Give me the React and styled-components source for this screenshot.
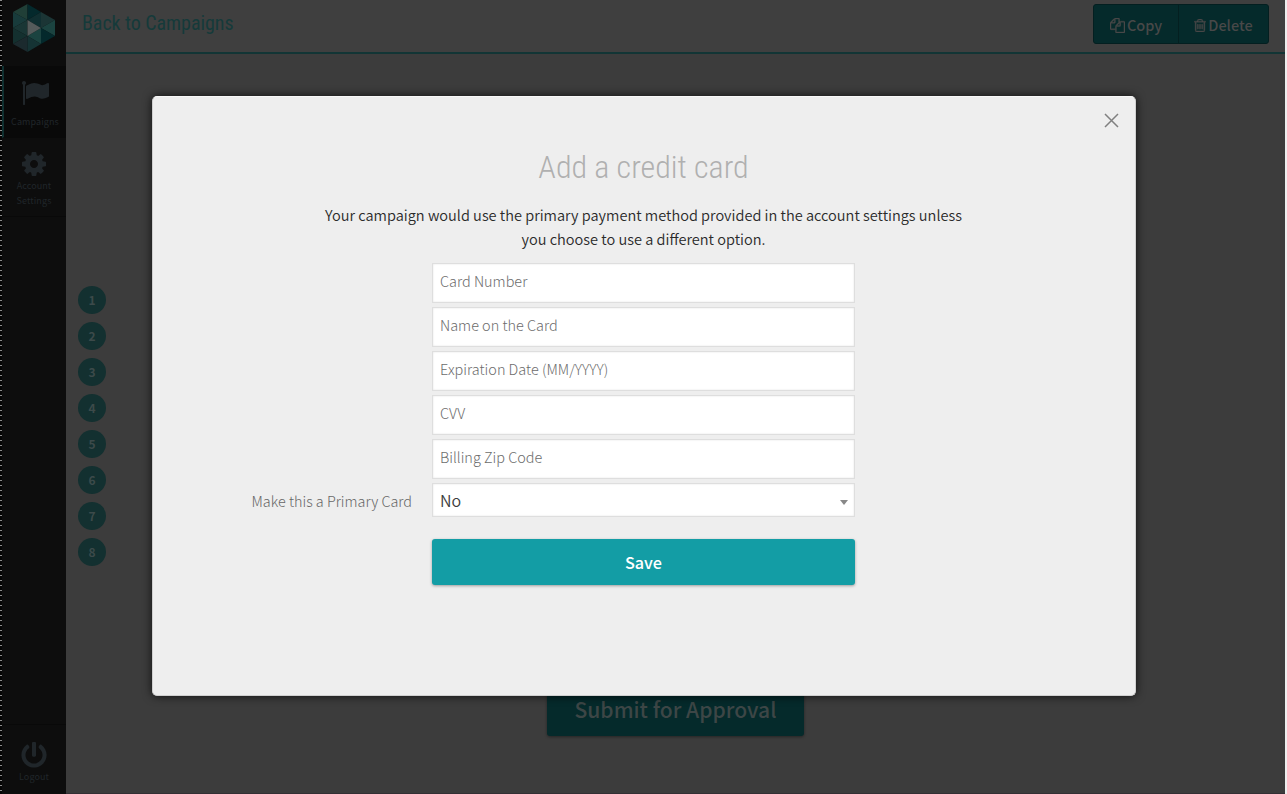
import React from 'react';
import styled, { createGlobalStyle } from 'styled-components';
import { FaPowerOff } from 'react-icons/fa';

const sans = '"Noto Sans CJK SC", "Noto Sans", sans-serif';
const condensed = '"Roboto Condensed", Roboto, sans-serif';

const GlobalStyle = createGlobalStyle`
  * { box-sizing: border-box; }
  html, body { margin: 0; height: 100%; overflow: hidden; background: #ededed; }
  #root { height: 100%; }
  body { font-family: ${sans}; font-size: 14px; line-height: 24px; }
  button, input { font-family: inherit; margin: 0; }
`;

const Page = styled.div`
  position: relative;
  display: flex;
  width: 1285px;
  height: 794px;
  background: #3c3c3c;
`;

const Ruler = styled.div`
  width: 2px;
  flex: none;
  background: repeating-linear-gradient(to bottom, #8d8d8d 0 1px, #050505 1px 5px);
`;

const Sidebar = styled.nav`
  width: 64px;
  flex: none;
  display: flex;
  flex-direction: column;
  background: #0d0d0d;
`;

const Brand = styled.div`
  height: 66px;
  padding: 4px 0 0 11px;
  svg { display: block; }
`;

const NavItem = styled.a`
  display: flex;
  flex-direction: column;
  align-items: center;
  height: ${p => p.$height}px;
  margin-top: ${p => (p.$last ? 'auto' : 0)};
  padding-top: ${p => p.$top}px;
  background: ${p => (p.$active ? '#090909' : 'transparent')};
  border-left: ${p => (p.$active ? '2px solid #0f3030' : '0')};
  border-top: ${p => (p.$last ? '1px solid #090909' : '0')};
  border-bottom: ${p => (p.$last ? '0' : '1px solid #090909')};
  color: #20262a;
  svg { display: block; }
`;

const NavLabel = styled.span`
  margin-top: ${p => p.$gap}px;
  font-size: 9px;
  line-height: 15px;
  letter-spacing: 0.1px;
  text-align: center;
  white-space: pre-line;
`;

const Main = styled.main`
  flex: 1;
  display: flex;
  flex-direction: column;
  border-bottom: 1px solid #332f34;
`;

const Header = styled.header`
  display: flex;
  justify-content: space-between;
  height: 54px;
  padding: 4px 16px 0;
  background: #3f3f3f;
  border-bottom: 2px solid #123535;
`;

const BackLink = styled.a`
  font-family: ${condensed};
  font-size: 20px;
  font-weight: 400;
  font-stretch: 75%;
  line-height: 38px;
  letter-spacing: -0.05px;
  color: #153a3a;
  white-space: nowrap;
`;

const ButtonGroup = styled.div`
  display: flex;
  height: 40px;
  border: 1px solid #041f20;
  border-radius: 3px;
  background: #052a2b;
  overflow: hidden;
`;

const HeaderButton = styled.button`
  display: flex;
  align-items: center;
  justify-content: center;
  gap: 2px;
  width: ${p => p.$width}px;
  padding: 1px 0 0;
  border: 0;
  border-left: ${p => (p.$divided ? '1px solid #041f20' : '0')};
  background: transparent;
  color: #484848;
  font-size: 14.5px;
  font-weight: 500;
  svg { margin-top: 2px; }
`;

const Steps = styled.ol`
  list-style: none;
  margin: 232px 0 0;
  padding: 0 12px;
  display: flex;
  flex-direction: column;
  gap: 8px;
`;

const Step = styled.li`
  width: 28px;
  height: 28px;
  border-radius: 50%;
  background: #133030;
  color: #3c4a4a;
  font-size: 12px;
  font-weight: 700;
  line-height: 27px;
  text-align: center;
`;

const Submit = styled.button`
  align-self: center;
  width: 257px;
  height: 52px;
  margin-top: 118px;
  padding: 0 0 2px;
  border: 0;
  border-radius: 3px;
  background: #052a2b;
  box-shadow: 0 1px 3px rgba(0, 0, 0, 0.4);
  color: #3d4646;
  font-size: 21.1px;
  font-weight: 500;
  line-height: 50px;
`;

const Backdrop = styled.div`
  position: absolute;
  inset: 0;
  display: flex;
  align-items: flex-start;
  padding: 96px 0 0 152px;
`;

const Dialog = styled.section`
  position: relative;
  display: flex;
  flex-direction: column;
  align-items: center;
  width: 984px;
  height: 600px;
  padding: 50px 1px 0 0;
  border: 1px solid #d0d0d0;
  border-top-color: #f8f8f8;
  border-radius: 5px;
  background: #eee;
  box-shadow: 0 0 10px rgba(0, 0, 0, 0.75);
`;

const Close = styled.button`
  position: absolute;
  top: 15.5px;
  right: 16.5px;
  padding: 0;
  border: 0;
  background: none;
  line-height: 0;
`;

const Title = styled.h2`
  margin: 0;
  font-family: ${condensed};
  font-size: 32px;
  font-weight: 300;
  font-stretch: 75%;
  line-height: 40px;
  color: #b0b0b0;
  white-space: nowrap;
`;

const Note = styled.p`
  margin: 16px 0 12px;
  width: 660px;
  font-size: 14.55px;
  font-weight: 350;
  line-height: 24px;
  color: #2a2a2a;
  text-align: center;
`;

const Form = styled.form`
  display: flex;
  flex-direction: column;
  width: 423px;
  gap: 4px;
`;

const Field = styled.input`
  display: block;
  width: 100%;
  height: 40px;
  padding: 0 7px 5px;
  border: 1px solid #dedede;
  border-radius: 0;
  background: #fff;
  box-shadow: inset 0 0 2px rgba(0, 0, 0, 0.12);
  font-size: 14.45px;
  font-weight: 300;
  &::placeholder { color: #6c6c6c; opacity: 1; }
`;

const SelectRow = styled.div`
  display: flex;
  align-items: center;
  gap: 20px;
  margin-left: -181px;
`;

const SelectLabel = styled.label`
  width: 161px;
  height: 22px;
  font-size: 14.4px;
  font-weight: 300;
  color: #666;
  white-space: nowrap;
  text-align: right;
`;

const Select = styled.div`
  flex: 1;
  display: flex;
  align-items: center;
  justify-content: space-between;
  height: 34px;
  padding: 0 6px 0 7px;
  border: 1px solid #dedede;
  background: #fff;
  box-shadow: inset 0 0 2px rgba(0, 0, 0, 0.12);
  font-size: 16px;
  font-weight: 350;
  color: #3c3c3c;
`;

const Caret = styled.i`
  margin-top: 4px;
  border: 4px solid transparent;
  border-top: 5px solid #888;
  border-bottom: 0;
`;

const Save = styled.button`
  height: 46px;
  margin-top: 18px;
  padding: 0;
  border: 0;
  border-radius: 3px;
  background: #139da5;
  box-shadow: 0 1px 3px rgba(0, 0, 0, 0.35);
  color: #fff;
  font-size: 16.2px;
  font-weight: 500;
`;

const Logo = () => (
  <svg width="44" height="48" viewBox="0 0 44 48">
    <path d="M0 8 14.500 0V16Z" fill="#203f37" />
    <path d="M14.500 0 28 8 14.500 16Z" fill="#04292c" />
    <path d="M0 8 14.500 16 0 24Z" fill="#183b3b" />
    <path d="M14.500 16 0 24 14.500 32Z" fill="#193635" />
    <path d="M0 24 14.500 32 0 40Z" fill="#14302f" />
    <path d="M14.500 32 0 40 14.500 48Z" fill="#1b2a2e" />
    <path d="M28 8V24L14.500 16Z" fill="#102f31" />
    <path d="M28 8 42 16 28 24Z" fill="#1b3535" />
    <path d="M42 16V32L28 24Z" fill="#1b4340" />
    <path d="M28 24 42 32 28 40Z" fill="#04292c" />
    <path d="M14.500 32 28 24V40Z" fill="#1b4340" />
    <path d="M14.500 32 28 40 14.500 48Z" fill="#153334" />
    <path d="M14.500 16 28 24 14.500 32Z" fill="#555b5b" />
  </svg>
);

const FlagIcon = () => (
  <svg width="28" height="25" viewBox="0 0 1792 1600">
    <path fill="currentColor" d="M320 128q0 72-64 110v1266q0 13-9.500 22.500t-22.500 9.500h-64q-13 0-22.500-9.500t-9.500-22.500v-1266q-64-38-64-110 0-53 37.500-90.500t90.500-37.500 90.500 37.500 37.500 90.500zm1472 64v763q0 25-12.500 38.500t-39.500 27.500q-215 116-369 116-61 0-123.500-22t-108.500-48-115.500-48-142.500-22q-192 0-464 146-17 9-33 9-26 0-45-19t-19-45v-742q0-32 31-55 21-14 79-43 236-120 421-120 107 0 200 29t219 88q38 19 88 19 54 0 117.500-21t110-47 88-47 54.500-21q26 0 45 19t19 45z" />
  </svg>
);

const CogIcon = () => (
  <svg width="24" height="24" viewBox="128 128 1536 1536">
    <path fill="currentColor" d="M1152 896q0-106-75-181t-181-75-181 75-75 181 75 181 181 75 181-75 75-181zm512-109v222q0 12-8 23t-20 13l-185 28q-19 54-39 91 35 50 107 138 10 12 10 25t-9 23q-27 37-99 108t-94 71q-12 0-26-9l-138-108q-44 23-91 38-16 136-29 186-7 28-36 28h-222q-14 0-24.500-8.500t-11.500-21.500l-28-184q-49-16-90-37l-141 107q-10 9-25 9-14 0-25-11-126-114-165-168-7-10-7-23 0-12 8-23 15-21 51-66.500t54-70.500q-27-50-41-99l-183-27q-13-2-21-12.500t-8-23.500v-222q0-12 8-23t19-13l186-28q14-46 39-92-40-57-107-138-10-12-10-24 0-10 9-23 26-36 98.500-107.500t94.500-71.500q13 0 26 10l138 107q44-23 91-38 16-136 29-186 7-28 36-28h222q14 0 24.500 8.500t11.500 21.500l28 184q49 16 90 37l142-107q9-9 24-9 13 0 25 10 129 119 165 170 7 8 7 22 0 12-8 23-15 21-51 66.500t-54 70.500q26 50 41 98l183 28q13 2 21 12.500t8 23.500z" />
  </svg>
);

const CopyIcon = () => (
  <svg width="15" height="15" viewBox="0 0 1792 1792">
    <path fill="currentColor" stroke="currentColor" strokeWidth="40" d="M1696 384q40 0 68 28t28 68v1216q0 40-28 68t-68 28h-960q-40 0-68-28t-28-68v-288h-544q-40 0-68-28t-28-68v-672q0-40 20-88t48-76l408-408q28-28 76-48t88-20h416q40 0 68 28t28 68v328q68-40 128-40h416zm-544 213l-299 299h299v-299zm-640-384l-299 299h299v-299zm196 647l316-316v-416h-384v416q0 40-28 68t-68 28h-416v640h512v-256q0-40 20-88t48-76zm956 804v-1152h-384v416q0 40-28 68t-68 28h-416v640h896z" />
  </svg>
);

const TrashIcon = () => (
  <svg width="12" height="13" viewBox="96 128 1408 1536">
    <path fill="currentColor" stroke="currentColor" strokeWidth="40" d="M608 736v576q0 14-9 23t-23 9h-64q-14 0-23-9t-9-23v-576q0-14 9-23t23-9h64q14 0 23 9t9 23zm256 0v576q0 14-9 23t-23 9h-64q-14 0-23-9t-9-23v-576q0-14 9-23t23-9h64q14 0 23 9t9 23zm256 0v576q0 14-9 23t-23 9h-64q-14 0-23-9t-9-23v-576q0-14 9-23t23-9h64q14 0 23 9t9 23zm128 724v-948h-896v948q0 22 7 40.500t14.500 27 10.500 8.500h832q3 0 10.500-8.500t14.500-27 7-40.500zm-672-1076h448l-48-117q-7-9-17-11h-317q-10 2-17 11zm928 32v64q0 14-9 23t-23 9h-96v948q0 83-47 143.500t-113 60.500h-832q-66 0-113-58.500t-47-141.500v-952h-96q-14 0-23-9t-9-23v-64q0-14 9-23t23-9h309l70-167q15-37 54-63t79-26h320q40 0 79 26t54 63l70 167h309q14 0 23 9t9 23z" />
  </svg>
);

const CloseIcon = () => (
  <svg width="15" height="15" viewBox="0 0 15 15">
    <path d="M1 1 14 14M14 1 1 14" stroke="#808080" strokeWidth="1.500" fill="none" />
  </svg>
);

const steps = [1, 2, 3, 4, 5, 6, 7, 8];
const fields = ['Card Number', 'Name on the Card', 'Expiration Date (MM/YYYY)', 'CVV', 'Billing Zip Code'];

export default function App() {
  return (
    <>
      <GlobalStyle />
      <Page>
        <Ruler />
        <Sidebar>
          <Brand><Logo /></Brand>
          <NavItem $active $height={72} $top={15}>
            <FlagIcon />
            <NavLabel $gap={8}>Campaigns</NavLabel>
          </NavItem>
          <NavItem $height={79} $top={14}>
            <CogIcon />
            <NavLabel $gap={2}>{'Account\nSettings'}</NavLabel>
          </NavItem>
          <NavItem $last $height={70} $top={17}>
            <FaPowerOff size={26} />
            <NavLabel $gap={1}>Logout</NavLabel>
          </NavItem>
        </Sidebar>
        <Main>
          <Header>
            <BackLink>Back to Campaigns</BackLink>
            <ButtonGroup>
              <HeaderButton $width={84}><CopyIcon />Copy</HeaderButton>
              <HeaderButton $divided $width={90}><TrashIcon />Delete</HeaderButton>
            </ButtonGroup>
          </Header>
          <Steps>{steps.map(n => <Step key={n}>{n}</Step>)}</Steps>
          <Submit>Submit for Approval</Submit>
        </Main>
        <Backdrop>
          <Dialog>
            <Close aria-label="Close"><CloseIcon /></Close>
            <Title>Add a credit card</Title>
            <Note>
              Your campaign would use the primary payment method provided in the account settings unless
              you choose to use a different option.
            </Note>
            <Form>
              {fields.map(f => <Field key={f} placeholder={f} />)}
              <SelectRow>
                <SelectLabel>Make this a Primary Card</SelectLabel>
                <Select>No<Caret /></Select>
              </SelectRow>
              <Save type="button">Save</Save>
            </Form>
          </Dialog>
        </Backdrop>
      </Page>
    </>
  );
}
